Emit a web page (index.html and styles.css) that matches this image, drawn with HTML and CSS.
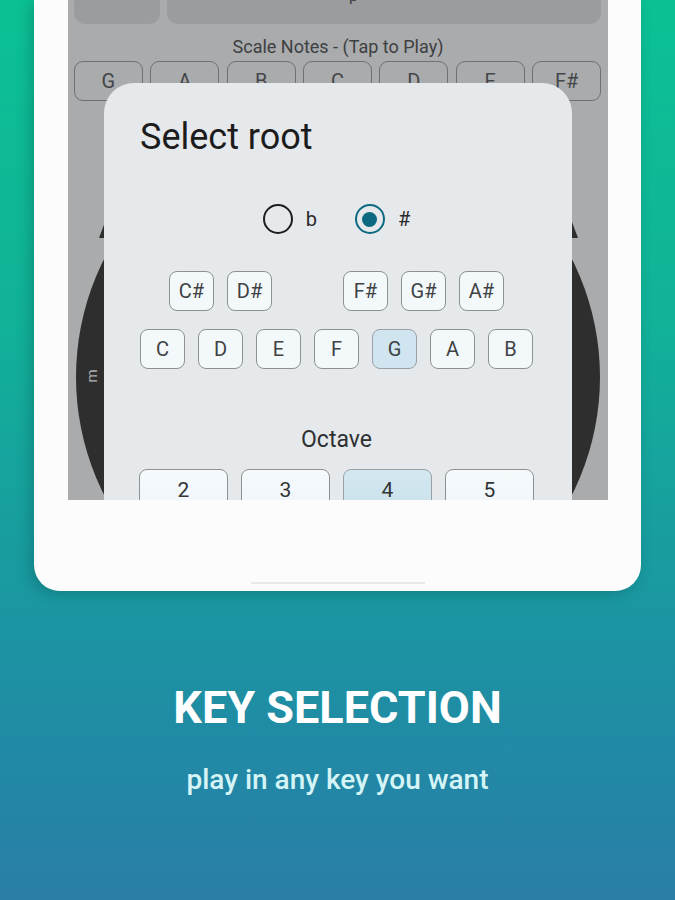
FILE: index.html
```html
<!DOCTYPE html>
<html lang="en">
<head>
<meta charset="utf-8">
<title>Key Selection</title>
<link rel="stylesheet" href="styles.css">
</head>
<body>
<div class="stage">
  <div class="device">
    <div class="screen">
      <div class="topbar">
        <div class="tb tb-left"></div>
        <div class="tb tb-right"><span class="tb-text">p</span></div>
      </div>
      <div class="scale-label">Scale Notes - (Tap to Play)</div>
      <div class="notes">
        <div class="note">G</div>
        <div class="note">A</div>
        <div class="note">B</div>
        <div class="note">C</div>
        <div class="note">D</div>
        <div class="note">E</div>
        <div class="note">F#</div>
      </div>
      <div class="wheel"><span class="wheel-label">m</span></div>
      <div class="tip tip-left"></div>
      <div class="tip tip-right"></div>
      <div class="dialog">
        <div class="dialog-title">Select root</div>
        <div class="radios">
          <div class="radio"><span class="radio-circle"></span><span class="radio-label">b</span></div>
          <div class="radio"><span class="radio-circle checked"></span><span class="radio-label">#</span></div>
        </div>
        <div class="keys sharps">
          <div class="key">C#</div>
          <div class="key">D#</div>
          <div class="key-gap"></div>
          <div class="key">F#</div>
          <div class="key">G#</div>
          <div class="key">A#</div>
        </div>
        <div class="keys naturals">
          <div class="key">C</div>
          <div class="key">D</div>
          <div class="key">E</div>
          <div class="key">F</div>
          <div class="key selected">G</div>
          <div class="key">A</div>
          <div class="key">B</div>
        </div>
        <div class="octave-label">Octave</div>
        <div class="octaves">
          <div class="oct">2</div>
          <div class="oct">3</div>
          <div class="oct selected">4</div>
          <div class="oct">5</div>
        </div>
      </div>
    </div>
    <div class="home"></div>
  </div>
  <h1 class="headline">KEY SELECTION</h1>
  <p class="subline">play in any key you want</p>
</div>
</body>
</html>
```
FILE: styles.css
```css
* { box-sizing: border-box; }
html, body { margin: 0; padding: 0; }
body {
  width: 675px;
  height: 900px;
  overflow: hidden;
  font-family: Roboto, "Noto Sans", "Liberation Sans", sans-serif;
  background: linear-gradient(180deg, #0bc194 0%, #11b298 35%, #1a98a1 66%, #2386a6 88%, #2a7ea7 100%);
}
.stage {
  display: flex;
  flex-direction: column;
  align-items: flex-start;
  width: 675px;
  height: 900px;
}
.device {
  margin-left: 34px;
  width: 607px;
  height: 591px;
  background: #fcfcfc;
  border-radius: 0 0 26px 26px;
  box-shadow: -4px 3px 14px rgba(0, 60, 60, 0.28);
  display: flex;
  flex-direction: column;
  align-items: flex-start;
}
.screen {
  position: relative;
  margin-left: 34px;
  width: 540px;
  height: 500px;
  background: #a9abad;
  overflow: hidden;
}
.topbar {
  display: flex;
  gap: 7px;
  padding: 0 7px 0 6px;
  height: 24px;
}
.tb {
  background: #9a9c9e;
  border-radius: 0 0 11px 11px;
  height: 24px;
  position: relative;
  overflow: hidden;
}
.tb-left { width: 86px; }
.tb-right { flex: 1; }
.tb-text {
  position: absolute;
  left: 182px;
  top: -14px;
  font-size: 16px;
  color: #3e3e3e;
}
.scale-label {
  margin-top: 12px;
  height: 22px;
  line-height: 22px;
  text-align: center;
  font-size: 18px;
  color: #3d3f41;
  width: 100%;
}
.notes {
  margin-top: 3px;
  display: grid;
  grid-template-columns: repeat(7, 1fr);
  gap: 7.5px;
  padding: 0 7px 0 6px;
}
.note {
  height: 40px;
  border: 1.5px solid #6e7072;
  border-radius: 9px;
  display: flex;
  align-items: center;
  justify-content: center;
  font-size: 20px;
  color: #444648;
}
.wheel {
  position: absolute;
  left: 8px;
  top: 115px;
  width: 524px;
  height: 524px;
  border-radius: 50%;
  background: #2e2e2e;
}
.wheel-label {
  position: absolute;
  left: 9px;
  top: 252px;
  font-size: 15px;
  color: #b0b0b0;
  transform: rotate(-90deg);
}
.tip {
  position: absolute;
  top: 222px;
  width: 6px;
  height: 16px;
  background: #2e2e2e;
}
.tip-left { left: 31px; clip-path: polygon(100% 0, 0 100%, 100% 100%); }
.tip-right { left: 504px; clip-path: polygon(0 0, 100% 100%, 0 100%); }
.dialog {
  position: absolute;
  left: 36px;
  top: 83px;
  width: 468px;
  height: 470px;
  background: #e6e9ec;
  border-radius: 30px;
  padding: 33px 3px 0 0;
  display: flex;
  flex-direction: column;
  align-items: center;
}
.dialog-title {
  align-self: flex-start;
  margin-left: 36px;
  font-size: 36px;
  line-height: 42px;
  color: #1c1c1c;
}
.radios {
  margin-top: 45px;
  height: 32px;
  display: flex;
  align-items: center;
  gap: 38px;
  margin-left: 0;
}
.radio {
  display: flex;
  align-items: center;
  gap: 13px;
}
.radio-circle {
  width: 30px;
  height: 30px;
  border-radius: 50%;
  border: 2.6px solid #1d1d1d;
  display: flex;
  align-items: center;
  justify-content: center;
}
.radio-circle.checked {
  border-color: #0c6a80;
}
.radio-circle.checked::after {
  content: "";
  width: 15px;
  height: 15px;
  border-radius: 50%;
  background: #0c6a80;
}
.radio-label {
  font-size: 20px;
  color: #2a2a2a;
}
.keys {
  display: flex;
  gap: 13px;
}
.sharps { margin-top: 36px; }
.naturals { margin-top: 18px; }
.key, .key-gap {
  width: 45px;
  height: 40px;
}
.key {
  border: 1.2px solid #8e9194;
  border-radius: 8px;
  background: #f3f8fb;
  display: flex;
  align-items: center;
  justify-content: center;
  font-size: 20px;
  color: #404244;
}
.key.selected {
  background: #d0e5ef;
  border-color: #9aa1a6;
}
.octave-label {
  margin-top: 57px;
  font-size: 23px;
  line-height: 28px;
  color: #2e3032;
}
.octaves {
  margin-top: 15px;
  display: flex;
  gap: 13px;
}
.oct {
  width: 89px;
  height: 44px;
  border: 1.2px solid #8e9194;
  border-radius: 8px;
  background: linear-gradient(180deg, #f6fafd, #eef5f9);
  display: flex;
  align-items: flex-start;
  justify-content: center;
  padding-top: 8px;
  font-size: 21px;
  color: #333537;
}
.oct.selected {
  background: linear-gradient(180deg, #d3e7f0, #cae2ec);
  border-color: #9aa1a6;
}
.home {
  margin-top: 82px;
  margin-left: 217px;
  width: 174px;
  height: 2px;
  background: #e9e9e9;
}
.headline {
  align-self: stretch;
  margin: 91px 0 0 0;
  text-align: center;
  font-size: 45px;
  line-height: 52px;
  font-weight: 700;
  color: #ffffff;
  letter-spacing: 0;
}
.subline {
  align-self: stretch;
  margin: 29px 0 0 0;
  text-align: center;
  font-size: 28px;
  line-height: 34px;
  font-weight: 500;
  color: #d5f4f6;
}
```
